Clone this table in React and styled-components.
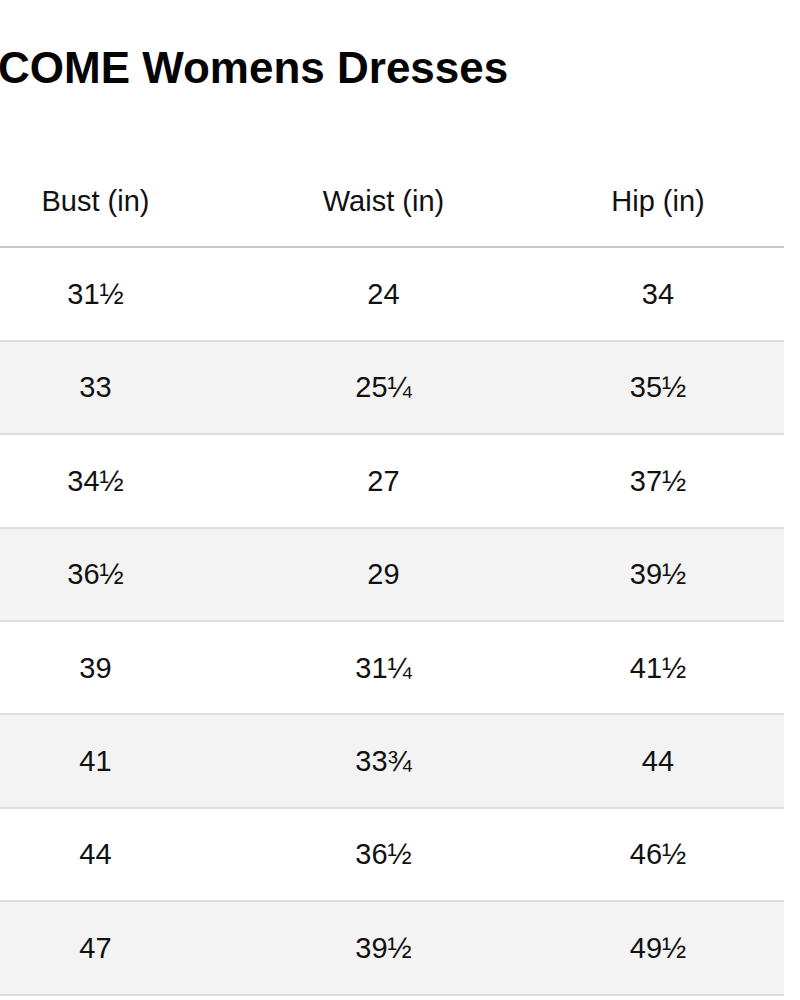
import React from 'react'
import styled, {createGlobalStyle} from 'styled-components'

const rows = [
    ["31½", "24", "34"],
    ["33", "25¼", "35½"],
    ["34½", "27", "37½"],
    ["36½", "29", "39½"],
    ["39", "31¼", "41½"],
    ["41", "33¾", "44"],
    ["44", "36½", "46½"],
    ["47", "39½", "49½"],
]

export default function App() {
  return (
    <Page>
        <GlobalStyle />
        <Title>COME Womens Dresses</Title>
        <Table>
            <HeadRow>
                <Cell>Bust (in)</Cell>
                <Cell>Waist (in)</Cell>
                <Cell>Hip (in)</Cell>
            </HeadRow>
            {rows.map((r, i) => (
                <Row key={i} $shaded={i % 2 === 1}>
                    {r.map((v, j) => <Cell key={j}>{v}</Cell>)}
                </Row>
            ))}
        </Table>
    </Page>
  )
}

const GlobalStyle = createGlobalStyle`
    html, body {
        margin: 0;
        padding: 0;
        background: #ffffff;
        overflow: hidden;
    }
    body {
        font-family: "Liberation Sans", Arial, sans-serif;
        color: #111111;
    }
`;

const Page = styled.div`
    width: 800px;
    height: 1000px;
    overflow: hidden;
`;

const Title = styled.h1`
    margin: 40px 0 0 -2px;
    font-size: 44px;
    line-height: 56px;
    font-weight: bold;
    color: #050505;
    white-space: nowrap;
`;

const Table = styled.div`
    margin: 59px 0 0 -44px;
    width: 828px;
`;

const Row = styled.div`
    display: grid;
    grid-template-columns: 279px 297px 252px;
    height: 93.4px;
    box-sizing: border-box;
    align-items: center;
    background: ${p => p.$shaded ? "#f3f3f3" : "#ffffff"};
    border-bottom: 2px solid #dedede;
`;

const HeadRow = styled(Row)`
    border-bottom-color: #c6c6c6;
`;

const Cell = styled.div`
    text-align: center;
    font-size: 29px;
    line-height: 34px;
`;
